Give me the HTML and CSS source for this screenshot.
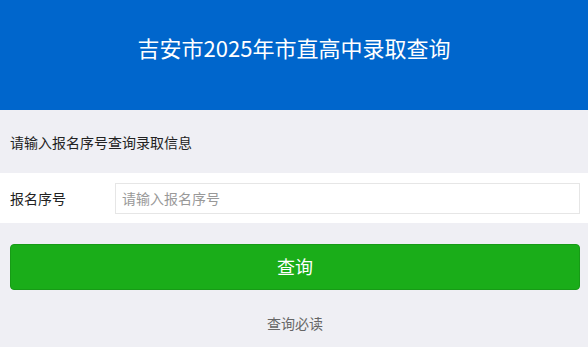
FILE: index.html
```html
<!DOCTYPE html>
<html lang="zh-CN">
<head>
    <meta charset="UTF-8">
    <meta name="viewport" content="width=device-width, initial-scale=1.0">
    <title>吉安市2025年市直高中录取查询</title>
    <link rel="stylesheet" href="styles.css">
</head>
<body>
<header class="header">
    <h1>吉安市2025年市直高中录取查询</h1>
</header>

<div class="tip">请输入报名序号查询录取信息</div>

<div class="form-row">
    <label class="form-label" for="bmxh">报名序号</label>
    <input type="text" id="bmxh" class="form-input" placeholder="请输入报名序号">
</div>

<div class="actions">
    <button class="btn-query">查询</button>
    <a href="#" class="notice-link">查询必读</a>
</div>
</body>
</html>
```

FILE: styles.css
```css
body {
    margin: 0;
    padding: 0;
    font-family: "Noto Sans CJK SC", "Liberation Sans", sans-serif;
    background-color: #efeff4;
    color: #000;
}

.header {
    height: 110px;
    background-color: #0066cc;
    display: flex;
    justify-content: center;
    align-items: center;
}

.header h1 {
    margin: 0;
    color: #fff;
    font-size: 22px;
    font-weight: normal;
    padding-bottom: 16px;
}

.tip {
    height: 63px;
    display: flex;
    align-items: center;
    padding-left: 10px;
    font-size: 14px;
    color: #222;
}

.form-row {
    height: 50px;
    background-color: #fff;
    display: flex;
    align-items: center;
    padding: 0 8px 0 10px;
}

.form-label {
    width: 105px;
    font-size: 14px;
    color: #222;
}

.form-input {
    flex: 1;
    height: 31px;
    box-sizing: border-box;
    border: 1px solid #e6e6e6;
    padding: 0 6px;
    font-family: inherit;
    font-size: 14px;
    outline: none;
}

.form-input::placeholder {
    color: #999;
}

.actions {
    padding: 21px 8px 0 10px;
    display: flex;
    flex-direction: column;
    align-items: center;
}

.btn-query {
    width: 100%;
    height: 46px;
    border: 1px solid #179b16;
    border-radius: 4px;
    background-color: #1aad19;
    color: #fff;
    font-family: inherit;
    font-size: 18px;
    padding-bottom: 3px;
    cursor: pointer;
}

.notice-link {
    margin-top: 23px;
    font-size: 14px;
    color: #666;
    text-decoration: none;
}
```
